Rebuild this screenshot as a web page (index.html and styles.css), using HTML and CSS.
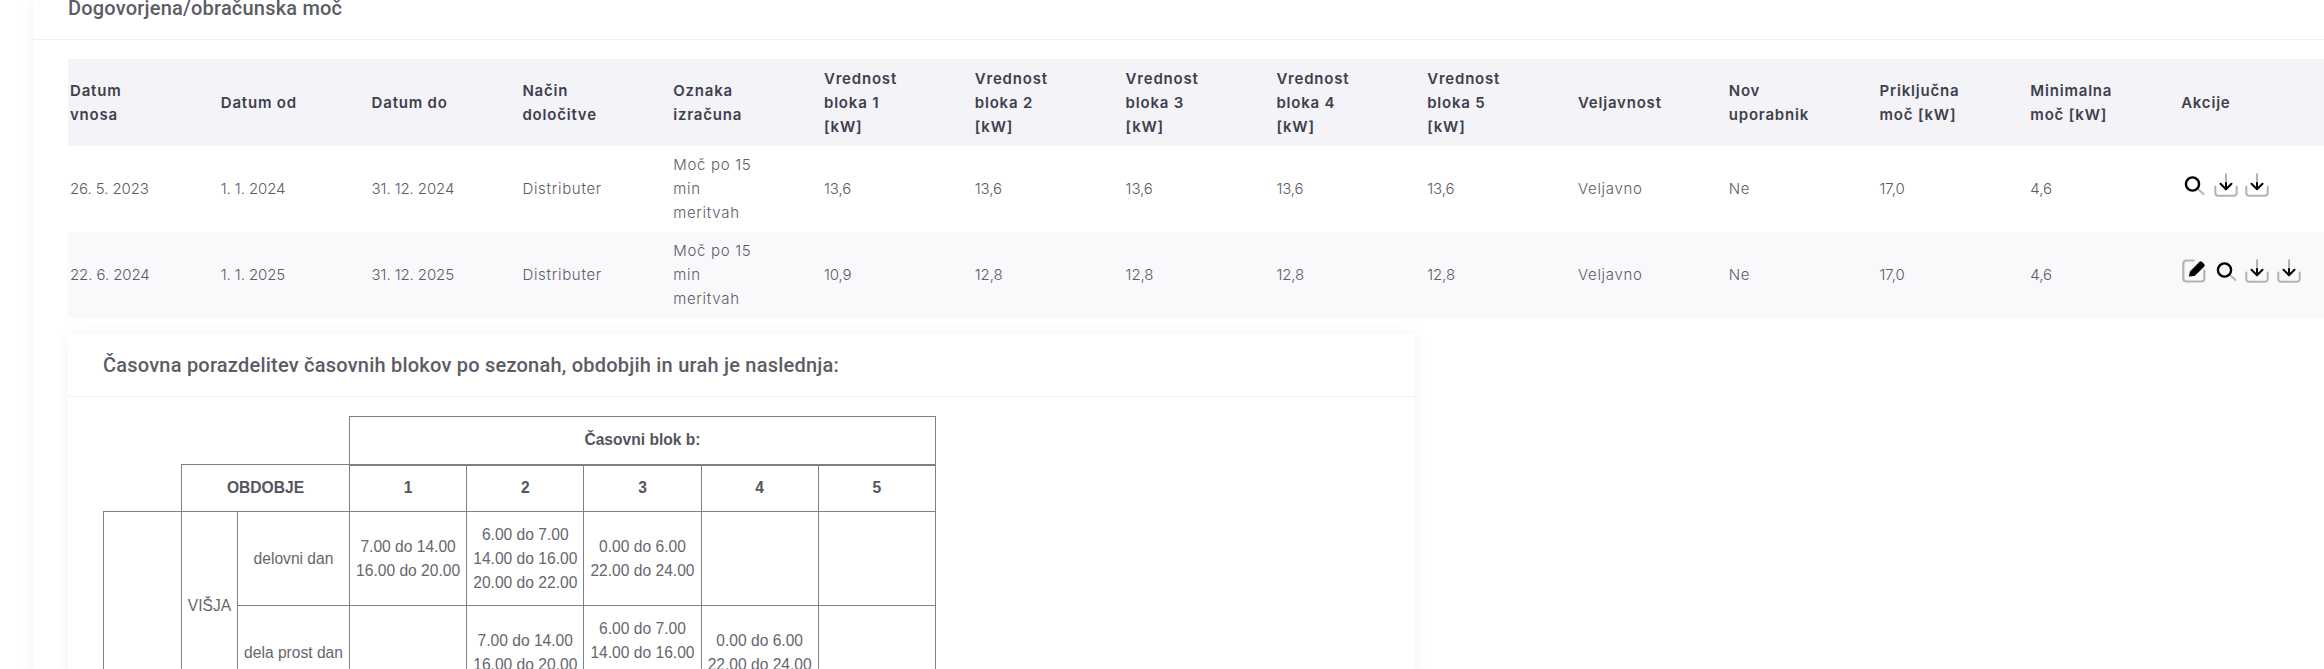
FILE: index.html
```html
<!DOCTYPE html>
<html lang="sl">
<head>
<meta charset="utf-8">
<title>Dogovorjena/obračunska moč</title>
<link rel="stylesheet" href="styles.css">
</head>
<body>
<svg class="defs" width="0" height="0" aria-hidden="true">
  <defs>
    <symbol id="i-search" viewBox="0 0 24 24">
      <path d="M16 16l5.5 5" fill="none" stroke="#b5b5b5" stroke-width="2" stroke-linecap="round"/>
      <circle cx="10.5" cy="11" r="6.6" fill="none" stroke="#000" stroke-width="2.4"/>
    </symbol>
    <symbol id="i-down" viewBox="0 0 24 24">
      <path d="M1.3 13.5v6.2a3 3 0 0 0 3 3h15.4a3 3 0 0 0 3-3v-6.2" fill="none" stroke="#b3b3b3" stroke-width="2" stroke-linecap="round"/>
      <path d="M12 1v9" fill="none" stroke="#a0a0a0" stroke-width="1.6" stroke-linecap="round"/>
      <path d="M12 10v6M6.5 10.8l5.5 5.4 5.5-5.4" fill="none" stroke="#000" stroke-width="2" stroke-linecap="round" stroke-linejoin="round"/>
    </symbol>
    <symbol id="i-edit" viewBox="0 0 24 24">
      <path d="M11.5 1.5H4.3a3 3 0 0 0-3 3v15a3 3 0 0 0 3 3h15a3 3 0 0 0 3-3v-8" fill="none" stroke="#b3b3b3" stroke-width="2.2" stroke-linecap="round"/>
      <path d="M6.8 17.6l1.2-5L17.3 3a2 2 0 0 1 2.8 0l2 2a2 2 0 0 1 0 2.8L12.6 17z" fill="#000"/>
    </symbol>
  </defs>
</svg>
<main class="panel">
  <h2 class="panel-title">Dogovorjena/obračunska moč</h2>
  <div class="panel-body">
    <table class="power">
      <thead>
        <tr>
          <th>Datum<br>vnosa</th><th>Datum od</th><th>Datum do</th><th>Način<br>določitve</th><th>Oznaka<br>izračuna</th>
          <th>Vrednost<br>bloka 1<br>[kW]</th><th>Vrednost<br>bloka 2<br>[kW]</th><th>Vrednost<br>bloka 3<br>[kW]</th><th>Vrednost<br>bloka 4<br>[kW]</th><th>Vrednost<br>bloka 5<br>[kW]</th>
          <th>Veljavnost</th><th>Nov<br>uporabnik</th><th>Priključna<br>moč [kW]</th><th>Minimalna<br>moč [kW]</th><th>Akcije</th>
        </tr>
      </thead>
      <tbody>
        <tr>
          <td class="num">26. 5. 2023</td><td class="num">1. 1. 2024</td><td class="num">31. 12. 2024</td><td>Distributer</td><td>Moč po 15<br>min<br>meritvah</td>
          <td class="num">13,6</td><td class="num">13,6</td><td class="num">13,6</td><td class="num">13,6</td><td class="num">13,6</td>
          <td>Veljavno</td><td>Ne</td><td class="num">17,0</td><td class="num">4,6</td>
          <td><div class="actions">
            <svg class="icon"><use href="#i-search"/></svg>
            <svg class="icon"><use href="#i-down"/></svg>
            <svg class="icon"><use href="#i-down"/></svg>
          </div></td>
        </tr>
        <tr>
          <td class="num">22. 6. 2024</td><td class="num">1. 1. 2025</td><td class="num">31. 12. 2025</td><td>Distributer</td><td>Moč po 15<br>min<br>meritvah</td>
          <td class="num">10,9</td><td class="num">12,8</td><td class="num">12,8</td><td class="num">12,8</td><td class="num">12,8</td>
          <td>Veljavno</td><td>Ne</td><td class="num">17,0</td><td class="num">4,6</td>
          <td><div class="actions">
            <svg class="icon"><use href="#i-edit"/></svg>
            <svg class="icon"><use href="#i-search"/></svg>
            <svg class="icon"><use href="#i-down"/></svg>
            <svg class="icon"><use href="#i-down"/></svg>
          </div></td>
        </tr>
      </tbody>
    </table>
    <section class="card">
      <h3 class="card-title">Časovna porazdelitev časovnih blokov po sezonah, obdobjih in urah je naslednja:</h3>
      <div class="card-body">
        <table class="blocks">
          <colgroup>
            <col class="c-season"><col class="c-level"><col class="c-day">
            <col class="c-block"><col class="c-block"><col class="c-block"><col class="c-block"><col class="c-block">
          </colgroup>
          <tr class="r-top">
            <td class="blank" colspan="3"></td>
            <th colspan="5">Časovni blok b:</th>
          </tr>
          <tr class="r-head">
            <td class="blank"></td>
            <th colspan="2">OBDOBJE</th>
            <th>1</th><th>2</th><th>3</th><th>4</th><th>5</th>
          </tr>
          <tr class="r-data">
            <td rowspan="2"></td>
            <td rowspan="2">VIŠJA</td>
            <td>delovni dan</td>
            <td>7.00 do 14.00<br>16.00 do 20.00</td>
            <td>6.00 do 7.00<br>14.00 do 16.00<br>20.00 do 22.00</td>
            <td>0.00 do 6.00<br>22.00 do 24.00</td>
            <td></td><td></td>
          </tr>
          <tr class="r-data">
            <td>dela prost dan</td>
            <td></td>
            <td>7.00 do 14.00<br>16.00 do 20.00</td>
            <td>6.00 do 7.00<br>14.00 do 16.00<br>20.00 do 22.00</td>
            <td>0.00 do 6.00<br>22.00 do 24.00</td>
            <td></td>
          </tr>
        </table>
      </div>
    </section>
  </div>
</main>
</body>
</html>
```
FILE: styles.css
```css
html, body {
  margin: 0;
  height: 669px;
  overflow: hidden;
  background: #fff;
}

.defs {
  display: block;
  height: 0;
}

.panel {
  margin-left: 33px;
  width: 2400px;
  background: #fff;
  box-shadow: 0 0 14px rgba(0, 0, 0, 0.05);
  min-height: 669px;
}

.panel-title {
  margin: 0;
  height: 39px;
  padding: 0 35px;
  font: 500 20px/17px Roboto, sans-serif;
  color: #5c5c66;
  letter-spacing: 0.2px;
  border-bottom: 1px solid #efefef;
}

.panel-body {
  padding: 19px 35px 0;
}

.power {
  border-collapse: collapse;
  table-layout: fixed;
  width: 2262px;
  font-family: Inter, sans-serif;
  font-size: 15px;
  line-height: 24px;
}

.power th,
.power td {
  padding: 7px 2px;
  text-align: left;
  vertical-align: middle;
}

.power th {
  height: 73px;
  background: #f3f3f8;
  color: #3f3f4c;
  font-weight: 600;
  letter-spacing: 0.8px;
}

.power td {
  height: 72px;
  color: #5c5c66;
  font-weight: 300;
  letter-spacing: 0.7px;
}

.power td.num {
  letter-spacing: -0.1px;
}

.power tbody tr:nth-child(even) td {
  background: #f9f9fc;
}

.actions {
  display: flex;
  gap: 7.5px;
  padding-left: 1px;
  padding-bottom: 8px;
}

.icon {
  width: 24px;
  height: 24px;
  flex: none;
}

.card {
  margin-top: 16px;
  width: 1347px;
  background: #fff;
  box-shadow: 0 0 14px rgba(0, 0, 0, 0.05);
}

.card-title {
  margin: 0;
  padding: 0 35px;
  height: 62px;
  font: 500 20px/62px Roboto, sans-serif;
  color: #5c5c66;
  letter-spacing: 0.22px;
  border-bottom: 1px solid #efefef;
}

.card-body {
  padding: 19px 35px 20px;
}

.blocks {
  border-collapse: collapse;
  table-layout: fixed;
  width: 833px;
  font-family: "Liberation Sans", Arial, sans-serif;
  font-size: 15.6px;
  line-height: 24px;
  color: #66666e;
}

.c-season { width: 78px; }
.c-level { width: 56px; }
.c-day { width: 112px; }
.c-block { width: 117.2px; }

.blocks th,
.blocks td {
  padding: 0 2px;
  border: 1px solid #808080;
  text-align: center;
  vertical-align: middle;
}

.blocks th {
  font-weight: 700;
  color: #55555f;
}

.blocks .r-top th {
  border-bottom-width: 2px;
}

.blocks td.blank {
  border: 0;
}

.r-top {
  height: 48px;
}

.r-head {
  height: 47px;
}

.r-data {
  height: 94px;
}
```
